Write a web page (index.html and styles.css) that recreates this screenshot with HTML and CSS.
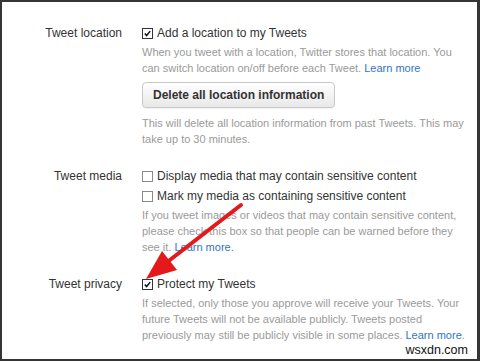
FILE: index.html
```html
<!DOCTYPE html>
<html>
<head>
<meta charset="utf-8">
<link rel="stylesheet" href="styles.css">
</head>
<body>
<div class="frame">
  <div class="settings">
    <div class="row">
      <div class="label">Tweet location</div>
      <div class="controls">
        <div class="option"><span class="cb checked"><svg viewBox="0 0 11 11"><path d="M2.2 5.6 L4.4 8 L8.8 2.6" fill="none" stroke="#111" stroke-width="1.8"/></svg></span>Add a location to my Tweets</div>
        <p class="help">When you tweet with a location, Twitter stores that location. You<br>can switch location on/off before each Tweet. <a class="link">Learn more</a></p>
        <button class="btn">Delete all location information</button>
        <p class="help after-btn">This will delete all location information from past Tweets. This may<br>take up to 30 minutes.</p>
      </div>
    </div>
    <div class="row">
      <div class="label">Tweet media</div>
      <div class="controls">
        <div class="option"><span class="cb"></span>Display media that may contain sensitive content</div>
        <div class="option second"><span class="cb"></span>Mark my media as containing sensitive content</div>
        <p class="help">If you tweet images or videos that may contain sensitive content,<br>please check this box so that people can be warned before they<br>see it. <a class="link">Learn more.</a></p>
      </div>
    </div>
    <div class="row">
      <div class="label">Tweet privacy</div>
      <div class="controls">
        <div class="option"><span class="cb checked"><svg viewBox="0 0 11 11"><path d="M2.2 5.6 L4.4 8 L8.8 2.6" fill="none" stroke="#111" stroke-width="1.8"/></svg></span>Protect my Tweets</div>
        <p class="help">If selected, only those you approve will receive your Tweets. Your<br>future Tweets will not be available publicly. Tweets posted<br>previously may still be publicly visible in some places. <a class="link">Learn more</a>.</p>
      </div>
    </div>
  </div>
  <svg class="arrow" width="480" height="361" viewBox="0 0 480 361">
    <line x1="241" y1="205" x2="166" y2="263" stroke="#e3191b" stroke-width="4" stroke-linecap="round"/>
    <polygon points="146,279 162,251 177,270" fill="#e3191b"/>
  </svg>
  <div class="watermark">wsxdn.com</div>
</div>
</body>
</html>
```

FILE: styles.css
```css
html, body {
  margin: 0;
  padding: 0;
  background: #fff;
}
.frame {
  position: relative;
  width: 480px;
  height: 361px;
  box-sizing: border-box;
  border: 2px solid #353535;
  border-right-width: 3px;
  background: #fff;
  overflow: hidden;
  font-family: "Liberation Sans", Arial, sans-serif;
  color: #333;
}
.settings {
  padding-top: 23px;
  display: flex;
  flex-direction: column;
  gap: 21px;
}
.row {
  display: grid;
  grid-template-columns: 120px 1fr;
  column-gap: 20px;
}
.label {
  text-align: right;
  font-size: 12px;
  line-height: 16px;
  color: #333;
}
.controls {
  display: flex;
  flex-direction: column;
  align-items: flex-start;
}
.option {
  display: flex;
  align-items: center;
  font-size: 12px;
  line-height: 16px;
  color: #333;
  white-space: nowrap;
}
.option.second {
  margin-top: 4px;
}
.cb {
  width: 11px;
  height: 11px;
  box-sizing: border-box;
  border: 1px solid #8a8a8a;
  background: #fff;
  margin-right: 4px;
  margin-top: 1px;
  display: inline-flex;
  flex: none;
}
.cb.checked {
  border-color: #333;
}
.cb svg {
  width: 9px;
  height: 9px;
}
.help {
  margin: 3px 0 0 0;
  font-size: 11px;
  line-height: 16px;
  color: #9a9a9a;
  white-space: nowrap;
}
.link {
  color: #2f74c6;
}
.btn {
  margin-top: 6px;
  height: 26px;
  padding: 0 10px;
  font-family: "Liberation Sans", Arial, sans-serif;
  font-size: 12px;
  font-weight: bold;
  color: #333;
  border: 1px solid #c9c9c9;
  border-radius: 4px;
  background: linear-gradient(#ffffff, #e8e8e8);
  box-shadow: 0 1px 0 rgba(0,0,0,0.05);
}
.help.after-btn {
  margin-top: 7px;
}
.arrow {
  position: absolute;
  left: -2px;
  top: -2px;
  pointer-events: none;
}
.watermark {
  position: absolute;
  right: 9px;
  bottom: 2px;
  font-family: "Liberation Sans", Arial, sans-serif;
  font-size: 12.5px;
  color: #111;
}
```
